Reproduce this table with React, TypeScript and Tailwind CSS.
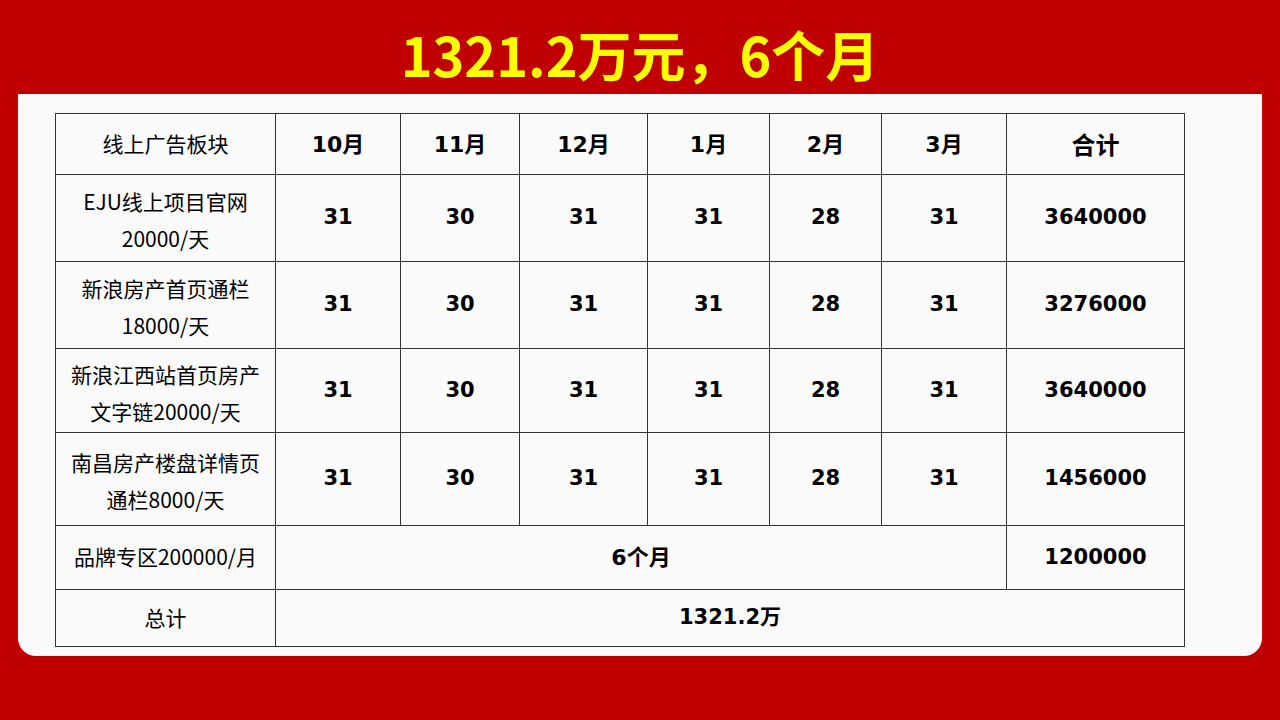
import React from "react";

const font = { fontFamily: '"Noto Sans CJK SC", "Noto Sans", sans-serif' };
const numFont = { fontFamily: '"DejaVu Sans", "Noto Sans CJK SC", sans-serif' };

const months = ["10月", "11月", "12月", "1月", "2月", "3月"];

const rows = [
    { name: ["EJU线上项目官网", "20000/天"], days: [31, 30, 31, 31, 28, 31], total: "3640000", h: "h-[87px]" },
    { name: ["新浪房产首页通栏", "18000/天"], days: [31, 30, 31, 31, 28, 31], total: "3276000", h: "h-[87px]" },
    { name: ["新浪江西站首页房产", "文字链20000/天"], days: [31, 30, 31, 31, 28, 31], total: "3640000", h: "h-[84px]" },
    { name: ["南昌房产楼盘详情页", "通栏8000/天"], days: [31, 30, 31, 31, 28, 31], total: "1456000", h: "h-[93px]" },
];

const cell = "border border-[#333] text-center align-middle p-0";
const label = `${cell} text-[21px] pb-[1px]`;
const num = `${cell} text-[21px] font-bold`;
const head = `${cell} text-[22px] font-bold`;

export default function App() {
    return (
        <main className="w-[1280px] h-[720px] bg-[#c00000] flex flex-col" style={font}>
            <h1 className="h-[94px] flex items-center justify-center pt-[14px] text-[54px] font-bold text-[#ffff00] leading-none">
                1321.2万元，6个月
            </h1>

            <section className="ml-[18px] w-[1244px] h-[562px] bg-[#fafafa] rounded-b-[18px] pl-[37px] pt-[19px]">
                <table className="table-fixed border-collapse w-[1129px] text-black">
                    <colgroup>
                        <col className="w-[220px]" />
                        <col className="w-[125px]" />
                        <col className="w-[119px]" />
                        <col className="w-[128px]" />
                        <col className="w-[122px]" />
                        <col className="w-[112px]" />
                        <col className="w-[125px]" />
                        <col className="w-[178px]" />
                    </colgroup>
                    <tbody>
                        <tr className="h-[61px]">
                            <td className={`${cell} text-[21px]`}>线上广告板块</td>
                            {months.map((m) => (
                                <td key={m} className={head} style={numFont}>{m}</td>
                            ))}
                            <td className={`${cell} text-[24px] font-bold`}>合计</td>
                        </tr>
                        {rows.map((r) => (
                            <tr key={r.total + r.name[0]} className={r.h}>
                                <td className={`${cell} text-[21px] leading-[37px] pt-[4px]`}>
                                    <div>{r.name[0]}</div>
                                    <div>{r.name[1]}</div>
                                </td>
                                {r.days.map((d, i) => (
                                    <td key={i} className={num} style={numFont}>{d}</td>
                                ))}
                                <td className={num} style={numFont}>{r.total}</td>
                            </tr>
                        ))}
                        <tr className="h-[64px]">
                            <td className={label}>品牌专区200000/月</td>
                            <td colSpan={6} className={head} style={numFont}>6个月</td>
                            <td className={num} style={numFont}>1200000</td>
                        </tr>
                        <tr className="h-[57px]">
                            <td className={label}>总计</td>
                            <td colSpan={7} className={num} style={numFont}>1321.2万</td>
                        </tr>
                    </tbody>
                </table>
            </section>
        </main>
    );
}
